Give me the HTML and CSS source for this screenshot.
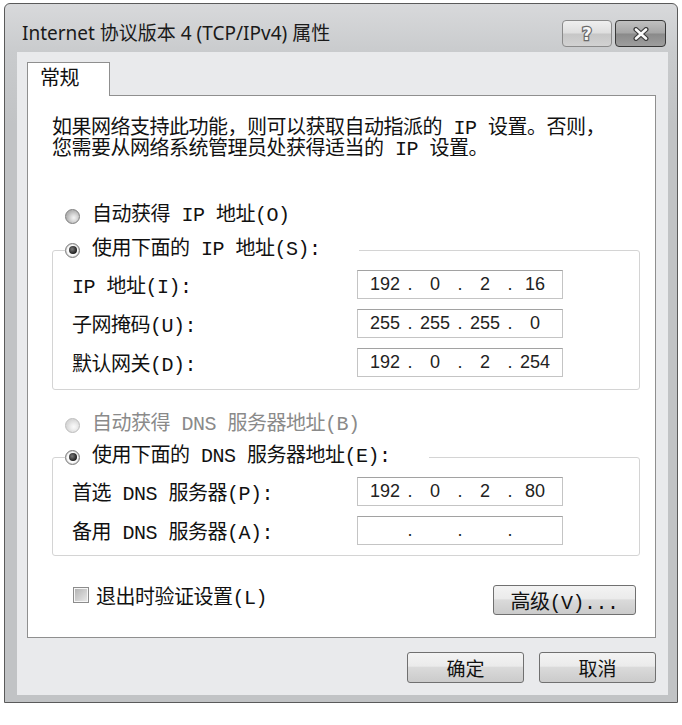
FILE: index.html
```html
<!DOCTYPE html>
<html>
<head>
  <meta charset="utf-8">
  <title>Internet 协议版本 4 (TCP/IPv4) 属性</title>
  <link rel="stylesheet" href="styles.css">
</head>
<body>
  <div class="window">
    <div class="titlebar">
      <span class="title">Internet 协议版本 4 (TCP/IPv4) 属性</span>
      <div class="caption-buttons">
        <button class="cap-btn help">
          <svg width="16" height="20" viewBox="0 0 16 20">
            <text x="8" y="16" text-anchor="middle" class="help-glyph">?</text>
          </svg>
        </button>
        <button class="cap-btn close">
          <svg width="20" height="14" viewBox="0 0 20 14">
            <path d="M5 2.5 L15 11.5 M15 2.5 L5 11.5" stroke="#3c3c3c" stroke-width="5" stroke-linecap="round"/>
            <path d="M5 2.5 L15 11.5 M15 2.5 L5 11.5" stroke="#fafafa" stroke-width="2.6" stroke-linecap="round"/>
          </svg>
        </button>
      </div>
    </div>

    <div class="client">
      <div class="tabs">
        <div class="tab">常规</div>
      </div>

      <div class="tab-panel">
        <p class="intro">如果网络支持此功能，则可以获取自动指派的 IP 设置。否则，<br>您需要从网络系统管理员处获得适当的 IP 设置。</p>

        <div class="option outer"><span class="radio"></span>自动获得 IP 地址(O)</div>

        <fieldset class="group">
          <legend><span class="option"><span class="radio on"></span>使用下面的 IP 地址(S):</span></legend>
          <div class="field-row">
            <span>IP 地址(I):</span>
            <div class="ip-box"><span>192</span><span>.</span><span>0</span><span>.</span><span>2</span><span>.</span><span>16</span></div>
          </div>
          <div class="field-row">
            <span>子网掩码(U):</span>
            <div class="ip-box"><span>255</span><span>.</span><span>255</span><span>.</span><span>255</span><span>.</span><span>0</span></div>
          </div>
          <div class="field-row">
            <span>默认网关(D):</span>
            <div class="ip-box"><span>192</span><span>.</span><span>0</span><span>.</span><span>2</span><span>.</span><span>254</span></div>
          </div>
        </fieldset>

        <div class="option outer dns disabled"><span class="radio"></span>自动获得 DNS 服务器地址(B)</div>

        <fieldset class="group dns-group">
          <legend><span class="option"><span class="radio on"></span>使用下面的 DNS 服务器地址(E):</span></legend>
          <div class="field-row">
            <span>首选 DNS 服务器(P):</span>
            <div class="ip-box"><span>192</span><span>.</span><span>0</span><span>.</span><span>2</span><span>.</span><span>80</span></div>
          </div>
          <div class="field-row">
            <span>备用 DNS 服务器(A):</span>
            <div class="ip-box"><span></span><span>.</span><span></span><span>.</span><span></span><span>.</span><span></span></div>
          </div>
        </fieldset>

        <div class="panel-footer">
          <label class="check"><span class="checkbox"></span>退出时验证设置(L)</label>
          <button class="btn advanced">高级(V)...</button>
        </div>
      </div>

      <div class="dialog-buttons">
        <button class="btn">确定</button>
        <button class="btn">取消</button>
      </div>
    </div>
  </div>
</body>
</html>
```

FILE: styles.css
```css
body {
  margin: 0;
  background: #fff;
  font-family: "Liberation Mono", "Noto Sans CJK SC", monospace;
  font-size: 20px;
  letter-spacing: -0.5px;
  color: #111;
}

.window {
  margin: 3px 0 0 4px;
  width: 674px;
  box-sizing: border-box;
  border: 1px solid #5a5a5a;
  border-radius: 6px 6px 0 0;
  padding-bottom: 7px;
  background: linear-gradient(#d8d9db 0, #c9cbcd 48px, #c1c3c5 120px, #c1c3c5);
}

.titlebar {
  display: flex;
  justify-content: space-between;
  align-items: flex-start;
  height: 48px;
  padding: 0 11px 0 17px;
}

.title {
  margin-top: 17px;
  font-family: "Noto Sans", "Noto Sans CJK SC", sans-serif;
  font-size: 19px;
  line-height: 24px;
  letter-spacing: 0;
  color: #1a1a1a;
}

.caption-buttons {
  display: flex;
  gap: 3px;
  margin-top: 16px;
}

.cap-btn {
  height: 27px;
  padding: 0;
  border-radius: 4px;
  display: flex;
  align-items: center;
  justify-content: center;
}

.help {
  width: 50px;
  border: 1px solid #8a8a8a;
  background: linear-gradient(#efefef, #dedede 48%, #c6c6c6 52%, #d2d2d2);
}

.help-glyph {
  font-family: "DejaVu Sans", sans-serif;
  font-weight: bold;
  font-size: 17px;
  fill: #f6f6f6;
  stroke: #6a6a6a;
  stroke-width: 2.5px;
  paint-order: stroke;
}

.close {
  width: 51px;
  border: 1px solid #383838;
  background: linear-gradient(#c0c0c0, #a6a6a6 48%, #8a8a8a 52%, #9e9e9e);
}

.client {
  margin: 0 9px 0 12px;
  background: #e9eaec;
  padding: 10px 12px 12px 10px;
}

.tabs {
  display: flex;
}

.tab {
  position: relative;
  width: 83px;
  height: 34px;
  box-sizing: border-box;
  margin-bottom: -1px;
  padding-left: 12px;
  border: 1px solid #8f8f8f;
  border-bottom: none;
  background: #fff;
  line-height: 33px;
}

.tab-panel {
  background: #fff;
  border: 1px solid #8f8f8f;
  padding: 22px 15px 22px 24px;
}

.intro {
  margin: 0;
  line-height: 21px;
}

.option {
  display: flex;
  align-items: center;
  gap: 12px;
  height: 20px;
  line-height: 20px;
}

.option.outer {
  margin: 46px 0 0 13px;
}

.option.outer.dns {
  margin-top: 25px;
}

.option.disabled {
  color: #8a8a8a;
}

.radio {
  position: relative;
  flex: none;
  width: 15px;
  height: 15px;
  box-sizing: border-box;
  border-radius: 50%;
  border: 1px solid #7e7e7e;
  background: radial-gradient(circle at 60% 60%, #f4f4f4 0, #dcdcdc 3px, #b4b4b4 7px);
}

.radio.on {
  background: radial-gradient(circle, #fbfbfb 0 5px, #c4c4c4 7px);
}

.radio.on::after {
  content: "";
  position: absolute;
  left: 2.5px;
  top: 2.5px;
  width: 8px;
  height: 8px;
  border-radius: 50%;
  background: radial-gradient(circle at 40% 40%, #7a7a7a, #1e1e1e 70%);
}

.disabled .radio {
  border-color: #bcbcbc;
  background: radial-gradient(circle at 60% 60%, #fafafa 0, #eeeeee 3px, #d8d8d8 7px);
}

.group {
  margin: 14px 0 0;
  padding: 0 76px 12px 19px;
  border: 1px solid #d4d4d4;
  border-radius: 3px;
}

.group legend {
  margin-left: -7px;
  padding: 0 38px 0 0;
}

.dns-group {
  margin-top: 12px;
  padding-bottom: 10px;
}

.field-row {
  display: flex;
  justify-content: space-between;
  align-items: center;
  margin-top: 10px;
}

.ip-box {
  width: 206px;
  height: 29px;
  box-sizing: border-box;
  padding-left: 7px;
  border: 1px solid #c4c4c4;
  border-top-color: #a2a2a2;
  display: grid;
  grid-template-columns: 40px 10px 40px 10px 40px 10px 40px;
  align-items: center;
  font-family: "Liberation Sans", sans-serif;
  font-size: 18px;
  letter-spacing: 0;
  color: #222;
  text-align: center;
}

.panel-footer {
  display: flex;
  justify-content: space-between;
  align-items: flex-start;
  margin-top: 29px;
  padding: 0 4px 0 21px;
}

.check {
  display: flex;
  align-items: center;
  gap: 7px;
  height: 20px;
}

.checkbox {
  width: 16px;
  height: 16px;
  box-sizing: border-box;
  border: 1px solid #8c8c8c;
  box-shadow: inset 0 0 0 1px #f6f6f6;
  background: linear-gradient(135deg, #b0b0b0, #ebebeb);
}

.btn {
  padding: 0;
  border: 1px solid #707070;
  border-radius: 3px;
  background: linear-gradient(#f3f3f3, #ebebeb 45%, #dadada 50%, #cbcbcb);
  color: #111;
  font-family: "Noto Sans CJK SC", sans-serif;
  font-size: 19px;
  letter-spacing: 0;
}

.btn.advanced {
  width: 143px;
  height: 30px;
  font-family: "Liberation Mono", "Noto Sans CJK SC", monospace;
  font-size: 20px;
  letter-spacing: -0.5px;
}

.dialog-buttons {
  display: flex;
  justify-content: flex-end;
  gap: 15px;
  margin-top: 14px;
}

.dialog-buttons .btn {
  width: 117px;
  height: 31px;
}
```
